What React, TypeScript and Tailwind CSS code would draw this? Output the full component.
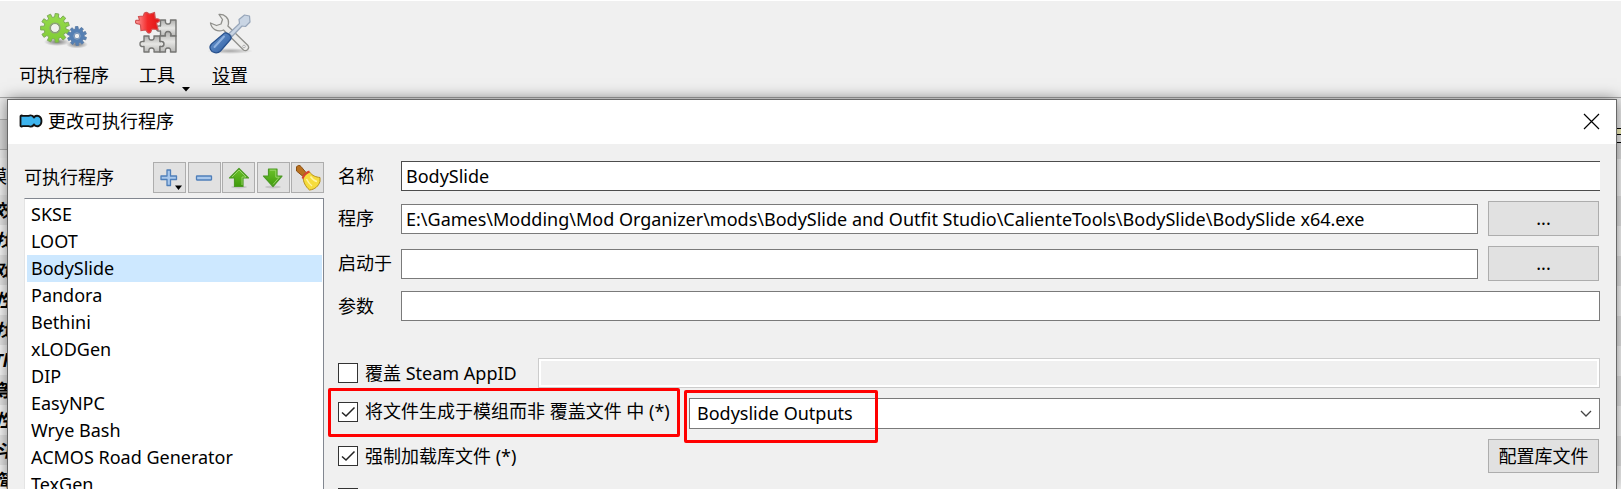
import React from "react";

const programs = [
  "SKSE",
  "LOOT",
  "BodySlide",
  "Pandora",
  "Bethini",
  "xLODGen",
  "DIP",
  "EasyNPC",
  "Wrye Bash",
  "ACMOS Road Generator",
  "TexGen",
];

const modRows = ["效", "找", "戏", "性", "找", "Th", "等", "性", "斗", "简"];

function gearPath(cx: number, cy: number, outer: number, inner: number, teeth: number, hole: number) {
  const step = (Math.PI * 2) / teeth;
  const at = (r: number, a: number) => `${(cx + r * Math.cos(a)).toFixed(2)} ${(cy + r * Math.sin(a)).toFixed(2)}`;
  let d = "";
  for (let i = 0; i < teeth; i++) {
    const a = i * step + 0.28;
    d += `${i === 0 ? "M" : "L"}${at(inner, a - step * 0.3)}L${at(outer, a - step * 0.22)}L${at(outer, a + step * 0.22)}L${at(inner, a + step * 0.3)}`;
  }
  d += `ZM${cx - hole} ${cy}a${hole} ${hole} 0 1 0 ${hole * 2} 0a${hole} ${hole} 0 1 0 ${-hole * 2} 0Z`;
  return d;
}

function GearsIcon() {
  return (
    <svg width="48" height="44" viewBox="0 0 48 44" aria-hidden="true">
      <defs>
        <linearGradient id="gearGreen" x1="0" y1="0" x2="0" y2="1">
          <stop offset="0" stopColor="#97dc4d" />
          <stop offset="1" stopColor="#7fcb35" />
        </linearGradient>
        <radialGradient id="gearShade">
          <stop offset="0" stopColor="#000" stopOpacity=".5" />
          <stop offset="1" stopColor="#000" stopOpacity="0" />
        </radialGradient>
      </defs>
      <ellipse cx="17" cy="32" rx="13" ry="4" fill="url(#gearShade)" />
      <ellipse cx="37" cy="34.500" rx="11" ry="4" fill="url(#gearShade)" />
      <path d={gearPath(15, 18, 14.5, 11, 11, 4.5)} fill="url(#gearGreen)" stroke="#7dab56" strokeWidth="1" fillRule="evenodd" />
      <circle cx="15" cy="18" r="5" fill="none" stroke="#8f9a84" strokeWidth="1.200" />
      <path d={gearPath(37, 26, 9.5, 7.2, 10, 2.8)} fill="#5580b4" stroke="#5f7fa8" strokeWidth="1" fillRule="evenodd" />
      <circle cx="37" cy="26" r="3.200" fill="none" stroke="#8fa6c4" strokeWidth="1" />
    </svg>
  );
}

function PuzzleIcon() {
  return (
    <svg width="44" height="44" viewBox="0 0 44 44" aria-hidden="true">
      <defs>
        <linearGradient id="pieceGrey" x1="0" y1="0" x2="0" y2="1">
          <stop offset="0" stopColor="#aeaeac" />
          <stop offset=".5" stopColor="#e6e6e4" />
          <stop offset="1" stopColor="#b8b8b6" />
        </linearGradient>
        <linearGradient id="pieceRed" x1="0" y1="0" x2="1" y2="0">
          <stop offset="0" stopColor="#ff9c9c" />
          <stop offset=".5" stopColor="#f32a2a" />
          <stop offset="1" stopColor="#e01414" />
        </linearGradient>
      </defs>
      <g stroke="#757573" strokeWidth="1.400" fill="url(#pieceGrey)" strokeLinejoin="round">
        <path d="M25.500 10h5c-.5 3 .5 4 2.500 4s3-1 2.500-4H41v16h-5c.5-3-1-4-3-4s-3 1-2.500 4h-5v-5c-3 .5-4-.5-4-2.500s1-3 4-2.500z" />
        <path d="M9 26h5c-.5 3 .5 4 2.500 4s3-1 2.500-4h6v5.500c3-.5 4 .5 4 2.500s-1 3-4 2.500V42h-6c.5-3-.5-4-2.500-4s-3 1-2.500 4H9v-5.500c-3 .5-4-.5-4-2.500s1-3 4-2.500z" />
        <path d="M25 26h5.500c-1-3 .5-4.500 2.500-4.500s3.500 1.500 2.500 4.500H41v16h-5.500c.5-3-.5-4-2.500-4s-3 1-2.500 4H25v-5.500c3 .5 4-.5 4-2.500s-1-3-4-2.500z" />
      </g>
      <path
        d="M4.500 6.500L9 6c1.500-.5 0-3 2.500-3.500S14 4 16 4l4.500-1.500.8 6c1.500 1 3.700-.5 4.200 1.500s-2 2-3 3l1.500 6.500-5.500-.5c-2 .5-.5 3.500-3 4S13 20.500 11.500 20l-4.500.5L6.500 15c-1-2-5 0-5-3s3-1 4-2z"
        transform="translate(-1 0)"
        fill="url(#pieceRed)"
        stroke="#d05050"
        strokeWidth="1.200"
      />
    </svg>
  );
}

function ToolsIcon() {
  return (
    <svg width="48" height="44" viewBox="0 0 48 44" aria-hidden="true">
      <defs>
        <linearGradient id="handleBlue" x1="0" y1="0" x2="1" y2="1">
          <stop offset="0" stopColor="#6f9bd2" />
          <stop offset="1" stopColor="#2c5ba0" />
        </linearGradient>
        <radialGradient id="toolShade">
          <stop offset="0" stopColor="#000" stopOpacity=".3" />
          <stop offset="1" stopColor="#000" stopOpacity="0" />
        </radialGradient>
      </defs>
      <ellipse cx="24" cy="41" rx="23" ry="3" fill="url(#toolShade)" />
      <path
        d="M13 4.500c5.500-.5 10 3.500 9.500 8.500 0 1-.2 2-.6 3L42 35.500c2 3-1.500 6.500-4.500 4.500L17.500 20c-5.500 2.500-12-.5-13-7l6 2.500L15 14l1.500-4.500z"
        fill="#ececea"
        stroke="#8f8f8b"
        strokeWidth="1.300"
        strokeLinejoin="round"
      />
      <circle cx="38" cy="36.500" r="1.300" fill="#f8f8f8" stroke="#999" strokeWidth=".7" />
      <path
        d="M23 23.500L33.500 13.500l-.5-4L38.500 5l5 1 .5 6-4.500 4.500-3.500-.5-10 10.500z"
        fill="#c9d5e4"
        stroke="#97a6ba"
        strokeWidth="1.200"
        strokeLinejoin="round"
      />
      <path
        d="M18.500 23c3-1 7.500 3 6.500 6L14.500 41c-3 3-8.500 2-10-1.500-1-2-.5-4 1-5.500z"
        fill="url(#handleBlue)"
        stroke="#27508c"
        strokeWidth="1.200"
      />
      <path d="M18 26.500L8.500 37" stroke="#8fb2e0" strokeWidth="2" strokeLinecap="round" />
    </svg>
  );
}

function LogoIcon() {
  return (
    <svg width="24" height="16" viewBox="0 0 24 16" aria-hidden="true">
      <path
        d="M1.500 3.200c0-.5.500-.8 1-.7l1.500.3h5.500c2-.8 4-.3 5.500 1.200 3-2.500 7.500-1 7.500 4s-4.500 6.500-7.500 4c-1.500 1.500-3.500 2-5.500 1.200H4l-1.500.3c-.5.100-1-.2-1-.7z"
        fill="#3db4ee"
        stroke="#111"
        strokeWidth="1.800"
        strokeLinejoin="round"
      />
      <path d="M13 3l2 2.300L16.500 3.500M13 13l2-2.300 1.500 1.800" fill="none" stroke="#111" strokeWidth="1" />
    </svg>
  );
}

function Arrow({ down = false }: { down?: boolean }) {
  return (
    <svg width="22" height="22" viewBox="0 0 22 22" aria-hidden="true">
      <defs>
        <linearGradient id="arrowGreen" x1="0" y1="0" x2="0" y2="1">
          <stop offset="0" stopColor="#6cc22c" />
          <stop offset="1" stopColor="#3f9b0b" />
        </linearGradient>
      </defs>
      <ellipse cx="11" cy="20" rx="8" ry="1.500" fill="#000" opacity=".12" />
      <path
        d={down ? "M6.500 2h8.500v7h5L11 19.500 1.500 9h5z" : "M11 1.500L20.500 11H15v8.500H6.500V11h-5z"}
        fill="url(#arrowGreen)"
        stroke="#4c9a24"
        strokeWidth="1.200"
        strokeLinejoin="round"
      />
      <path
        d={down ? "M7.800 3.200h6v7h3.500L11 17.500" : "M4 10L11 3l7 7h-4v8"}
        fill="none"
        stroke="#a5dd78"
        strokeWidth="1"
        opacity=".8"
      />
    </svg>
  );
}

function BroomIcon() {
  return (
    <svg width="28" height="28" viewBox="0 0 28 28" aria-hidden="true">
      <path d="M2.500 3c1-2 3.500-2 4.500-.5L12 8.500 8.500 12l-6-5z" fill="#b9711f" stroke="#8a4f12" strokeWidth="1" />
      <path d="M9 12l6.500-4c3 4 6.500 5 10.500 5.500v4c-1.500 4.500-5 8-10.500 8.500-4-3.500-6.500-8-6.500-14z" fill="#f6dc3c" stroke="#b8901a" strokeWidth="1" />
      <path d="M12.500 15c2 4 3.500 5.500 5.500 7M16.500 12.500c2 3 4 4.500 6.500 5" stroke="#fff3a0" strokeWidth="1.500" fill="none" />
      <path d="M8.500 14.500c1.500-3.500 4-6 7-7" stroke="#d8452c" strokeWidth="2" fill="none" />
    </svg>
  );
}

function ToolButton({ label, children }: { label: string; children: React.ReactNode }) {
  return (
    <button
      type="button"
      aria-label={label}
      className="relative flex h-[31px] w-[33px] items-center justify-center border border-[#adadad] bg-[#e1e1e1]"
    >
      {children}
    </button>
  );
}

function CheckBox({ id, label, checked = false }: { id: string; label: string; checked?: boolean }) {
  return (
    <span className="flex shrink-0 items-center gap-[7px]">
      <span className="grid size-5 place-items-center">
        <input
          id={id}
          type="checkbox"
          defaultChecked={checked}
          className="peer col-start-1 row-start-1 size-5 appearance-none border border-[#333] bg-white"
        />
        <svg
          className="pointer-events-none invisible col-start-1 row-start-1 peer-checked:visible"
          width="16"
          height="16"
          viewBox="0 0 16 16"
          aria-hidden="true"
        >
          <path d="M2 8.500l4 3.500 8.500-8.500" fill="none" stroke="#222" strokeWidth="1.500" />
        </svg>
      </span>
      <label htmlFor={id} className="whitespace-nowrap">
        {label}
      </label>
    </span>
  );
}

function Field({ id, label, value = "", browse = false, dark = false }: { id: string; label: string; value?: string; browse?: boolean; dark?: boolean }) {
  return (
    <div className="flex items-center">
      <label htmlFor={id} className="w-[63px] shrink-0">
        {label}
      </label>
      <input
        id={id}
        type="text"
        defaultValue={value}
        className={
          dark
            ? "h-[30px] min-w-0 flex-1 border border-r-0 border-[#4c4c4c] bg-white px-1 outline-none"
            : "h-[30px] min-w-0 flex-1 border border-[#7a7a7a] bg-white px-1 outline-none"
        }
      />
      {browse && (
        <button type="button" className="mr-px ml-[10px] h-[35px] w-[111px] border border-[#adadad] bg-[#e1e1e1]">
          ...
        </button>
      )}
    </div>
  );
}

export default function App() {
  return (
    <div className="flex h-screen flex-col overflow-hidden bg-[#f0f0f0] font-['Noto_Sans','Noto_Sans_CJK_SC',sans-serif] text-[18px] leading-[27px] text-black">
      <header className="flex h-[98px] shrink-0 items-start border-t border-b border-t-white border-b-[#a8a8a8] pt-[9px] pl-[19px]">
        <button type="button" className="flex flex-col items-center gap-2">
          <GearsIcon />
          <span>可执行程序</span>
        </button>
        <button type="button" className="relative ml-[26px] flex flex-col items-center gap-2">
          <PuzzleIcon />
          <span>工具</span>
          <svg className="absolute top-[77px] left-[47px]" width="8" height="5" viewBox="0 0 8 5" aria-hidden="true">
            <path d="M0 0h8L4 4.500z" fill="#000" />
          </svg>
        </button>
        <button type="button" className="ml-[27px] flex flex-col items-center gap-2">
          <ToolsIcon />
          <span>
            <u className="underline-offset-2">设</u>置
          </span>
        </button>
      </header>

      <div className="flex min-h-0 flex-1">
        <div className="flex w-[7px] shrink-0 flex-col overflow-hidden bg-[#f4f4f4]">
          <div className="h-[21px] shrink-0 bg-[#ececec]" />
          <div className="h-[31px] shrink-0 border-y border-[#b0b0b0] bg-[#dcdcdc]" />
          <div className="h-2 shrink-0 bg-[#f0f0f0]" />
          <div className="flex h-[37px] shrink-0 items-center justify-end">模</div>
          {modRows.map((text, i) => (
            <div
              key={i}
              className={
                i % 2 === 0
                  ? "flex h-[30px] shrink-0 items-center justify-center bg-[#e8e8e8] font-bold italic"
                  : "flex h-[30px] shrink-0 items-center justify-center bg-[#fafafa] font-bold italic"
              }
            >
              {text}
            </div>
          ))}
        </div>

        <section
          role="dialog"
          aria-labelledby="dialog-title"
          className="relative mt-px flex min-w-0 flex-1 flex-col border border-b-0 border-[#686868] bg-[#f0f0f0] shadow-[0_0_14px_rgba(0,0,0,0.5)]"
        >
          <div className="flex h-11 shrink-0 items-center bg-white pr-4 pb-0.5 pl-[11px]">
            <LogoIcon />
            <h1 id="dialog-title" className="ml-[5px] flex-1">
              更改可执行程序
            </h1>
            <button type="button" aria-label="关闭">
              <svg width="17" height="17" viewBox="0 0 17 17" aria-hidden="true">
                <path d="M1 1l15 15M16 1L1 16" stroke="#000" strokeWidth="1.200" />
              </svg>
            </button>
          </div>

          <div className="flex min-h-0 flex-1 pt-[17px] pr-4 pl-4">
            <div className="flex w-[300px] shrink-0 flex-col">
              <div className="flex items-center justify-between pt-px">
                <span id="program-list">可执行程序</span>
                <div className="flex w-[171px] justify-between">
                  <ToolButton label="添加">
                    <svg width="31" height="29" viewBox="0 0 31 29" aria-hidden="true">
                      <path d="M13 7h3.500v6h6v3.500h-6v6H13v-6H7V13h6z" fill="#a9c8ec" stroke="#4f7fb9" strokeWidth="1.300" strokeLinejoin="round" />
                      <path d="M21 22.500h7L24.500 27z" fill="#000" />
                    </svg>
                  </ToolButton>
                  <ToolButton label="移除">
                    <svg width="18" height="8" viewBox="0 0 18 8" aria-hidden="true">
                      <rect x="1.500" y="2" width="15" height="4" rx=".5" fill="#a9c8ec" stroke="#4f7fb9" strokeWidth="1.300" />
                    </svg>
                  </ToolButton>
                  <ToolButton label="上移">
                    <Arrow />
                  </ToolButton>
                  <ToolButton label="下移">
                    <Arrow down />
                  </ToolButton>
                  <ToolButton label="清理">
                    <BroomIcon />
                  </ToolButton>
                </div>
              </div>
              <ul
                aria-labelledby="program-list"
                className="mt-[5px] min-h-0 flex-1 overflow-hidden border-t border-r border-l border-t-[#828790] border-r-[#828790] border-l-[#e4e4e4] bg-white pt-0.5 pr-px pl-0.5"
              >
                {programs.map((name) => (
                  <li key={name} className={name === "BodySlide" ? "bg-[#cde8ff] pl-1" : "pl-1"}>
                    {name}
                  </li>
                ))}
              </ul>
            </div>

            <form className="ml-[14px] flex min-w-0 flex-1 flex-col gap-[10px]">
              <Field id="name" label="名称" value="BodySlide" dark />
              <Field
                id="binary"
                label="程序"
                value="E:\Games\Modding\Mod Organizer\mods\BodySlide and Outfit Studio\CalienteTools\BodySlide\BodySlide x64.exe"
                browse
              />
              <Field id="start-in" label="启动于" browse />
              <Field id="arguments" label="参数" />

              <div className="mt-[27px] flex items-center">
                <div className="w-[200px] shrink-0">
                  <CheckBox id="steam" label="覆盖 Steam AppID" />
                </div>
                <input
                  type="text"
                  disabled
                  aria-label="Steam AppID"
                  className="h-[30px] min-w-0 flex-1 border border-[#ccc] bg-[#f0f0f0] shadow-[inset_0_0_0_2px_#fff]"
                />
              </div>

              <div className="flex items-start">
                <div className="relative w-[351px] shrink-0">
                  <CheckBox id="output" label="将文件生成于模组而非 覆盖文件 中 (*)" checked />
                  <span className="pointer-events-none absolute -top-[10px] -left-[10px] h-[49px] w-[352px] rounded-xs border-3 border-[#f00]" />
                </div>
                <div className="relative grid min-w-0 flex-1 items-center">
                  <select
                    aria-label="输出模组"
                    className="col-start-1 row-start-1 h-[31px] w-full appearance-none border border-[#7a7a7a] bg-white px-[7px] outline-none"
                  >
                    <option>Bodyslide Outputs</option>
                  </select>
                  <svg
                    className="pointer-events-none col-start-1 row-start-1 mr-2 justify-self-end"
                    width="12"
                    height="8"
                    viewBox="0 0 12 8"
                    aria-hidden="true"
                  >
                    <path d="M1 1l5 5 5-5" fill="none" stroke="#444" strokeWidth="1.300" />
                  </svg>
                  <span className="pointer-events-none absolute -top-2 -left-[5px] h-[53px] w-[194px] rounded-xs border-3 border-[#f00]" />
                </div>
              </div>

              <div className="flex items-center justify-between">
                <CheckBox id="libraries" label="强制加载库文件 (*)" checked />
                <button type="button" className="mr-px h-[34px] w-[111px] border border-[#adadad] bg-[#e1e1e1]">
                  配置库文件
                </button>
              </div>

              <div className="mt-[5px] flex items-start">
                <input type="checkbox" aria-label="其他选项" className="size-5 appearance-none border border-[#333] bg-white" />
              </div>
            </form>
          </div>
        </section>

        <div className="flex w-1 shrink-0 flex-col overflow-hidden bg-[#f0f0f0]">
          <div className="mt-[30px] h-[7px] shrink-0 border-y border-black bg-[#fbf8c0]" />
          <div className="h-2 shrink-0 border-b border-black" />
          <div className="h-4 shrink-0 bg-[#e4e4e4]" />
          <div className="h-[37px] shrink-0 bg-[#fafafa]" />
          {modRows.map((_, i) => (
            <div key={i} className={i % 2 === 0 ? "h-[30px] shrink-0 bg-[#e8e8e8]" : "h-[30px] shrink-0 bg-[#fafafa]"} />
          ))}
        </div>
      </div>
    </div>
  );
}
